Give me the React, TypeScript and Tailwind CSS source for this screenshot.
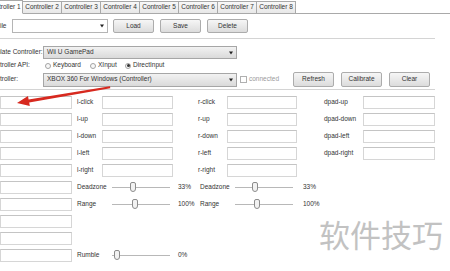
import React from 'react';

const tabs = ['Controller 2', 'Controller 3', 'Controller 4', 'Controller 5', 'Controller 6', 'Controller 7', 'Controller 8'];

function Button({ label, className = '' }: { label: string; className?: string }) {
  return (
    <div
      className={`flex items-center justify-center w-[41px] rounded-[2px] border border-[#acacac] bg-linear-to-b from-[#f6f6f6] to-[#dcdcdc] text-[#333] ${className}`}
    >
      {label}
    </div>
  );
}

// small black dropdown triangle used by the combo boxes
function ComboArrow() {
  return <div className="absolute right-[3px] top-1/2 -translate-y-1/2 w-0 h-0 border-x-[2px] border-x-transparent border-t-[3px] border-t-[#222]" />;
}

function Radio({ checked = false }: { checked?: boolean }) {
  return (
    <div className="flex items-center justify-center w-[6px] h-[6px] rounded-full border border-[#a3a3a3] bg-[#f8f8f8]">
      {checked && <div className="w-[3px] h-[3px] rounded-full bg-[#333]" />}
    </div>
  );
}

function Box() {
  return <div className="h-[13px] border border-[#d6d6d6] border-t-[#c4c4c4] bg-white" />;
}

function Slider({ width, thumb }: { width: number; thumb: number }) {
  return (
    <div className="relative h-[13px] shrink-0" style={{ width }}>
      <div className="absolute inset-x-0 top-[6px] h-px bg-[#b8b8b8]" />
      <div className="absolute top-[1px] w-[6px] h-[10px] rounded-[2px] rounded-b-[3px] border border-[#8c8c8c] bg-[#f2f2f2]" style={{ left: thumb }} />
    </div>
  );
}

function SliderRow({ rows }: { rows: { label: string; thumb: number; value: string }[] }) {
  return (
    <div className="col-span-6 flex items-center">
      {rows.map((r, i) => (
        <React.Fragment key={i}>
          <div className={i === 0 ? 'w-[40px] pl-[5px] shrink-0' : 'w-[35px] shrink-0'}>{r.label}</div>
          <Slider width={i === 0 ? 58 : 58} thumb={r.thumb} />
          <div className={i === 0 ? 'w-[30px] pl-[8px] shrink-0' : 'pl-[10px]'}>{r.value}</div>
        </React.Fragment>
      ))}
    </div>
  );
}

export default function App() {
  const left = ['l-click', 'l-up', 'l-down', 'l-left', 'l-right'];
  const right = ['r-click', 'r-up', 'r-down', 'r-left', 'r-right'];
  const dpad = ['dpad-up', 'dpad-down', 'dpad-left', 'dpad-right', ''];

  return (
    <div className="relative w-[450px] h-[271px] overflow-hidden bg-white font-['Liberation_Sans',Arial,sans-serif] text-[6.5px] leading-none text-[#333]">
      {/* Tabs */}
      <div className="flex items-end h-[14px] border-b border-[#a9a9a9]">
        <div className="-ml-[17px] -mb-px w-[40px] h-[14px] shrink-0 flex items-center pl-[3px] bg-white border border-b-white border-[#a9a9a9]">
          Controller 1
        </div>
        {tabs.map(t => (
          <div key={t} className="w-[39px] h-[12px] shrink-0 flex items-center justify-center border border-l-0 border-b-0 border-[#a9a9a9] bg-linear-to-b from-[#f8f8f8] to-[#e8e8e8]">
            {t}
          </div>
        ))}
      </div>

      {/* File row */}
      <div className="flex items-center h-[25px] w-[435px] border-b border-[#d4d4d4]">
        <div className="-ml-[4px] w-[16px] shrink-0">File</div>
        <div className="relative w-[96px] h-[14px] border border-[#b5b5b5] bg-white">
          <ComboArrow />
        </div>
        <Button label="Load" className="ml-[5px] h-[14px]" />
        <Button label="Save" className="ml-[6px] h-[14px]" />
        <Button label="Delete" className="ml-[6px] h-[14px]" />
      </div>

      {/* Controller settings */}
      <div className="w-[435px] pt-[7px] pb-[2px] border-b border-[#d4d4d4]">
        <div className="flex items-center h-[13px]">
          <div className="-ml-[13px] w-[56px] shrink-0">Emulate Controller:</div>
          <div className="relative flex items-center w-[194px] h-[13px] pl-[3px] border border-[#a6a6a6] bg-linear-to-b from-[#f2f2f2] to-[#dadada]">
            Wii U GamePad
            <ComboArrow />
          </div>
        </div>
        <div className="flex items-center h-[13px]">
          <div className="-ml-[12px] w-[57px] shrink-0">Controller API:</div>
          <div className="flex items-center w-[45px] gap-[2px] shrink-0">
            <Radio />
            <span>Keyboard</span>
          </div>
          <div className="flex items-center w-[35px] gap-[2px] shrink-0">
            <Radio />
            <span>XInput</span>
          </div>
          <div className="flex items-center gap-[2px]">
            <Radio checked />
            <span>DirectInput</span>
          </div>
        </div>
        <div className="flex items-center h-[15px]">
          <div className="-ml-[12px] w-[55px] shrink-0">Controller:</div>
          <div className="relative flex items-center w-[194px] h-[14px] pl-[3px] border border-[#a6a6a6] bg-linear-to-b from-[#f2f2f2] to-[#dadada]">
            XBOX 360 For Windows (Controller)
            <ComboArrow />
          </div>
          <div className="flex items-center w-[56px] pl-[3px] gap-[2px] shrink-0 text-[#9a9a9a]">
            <div className="w-[7px] h-[7px] border border-[#b0b0b0] bg-white" />
            <span>connected</span>
          </div>
          <Button label="Refresh" className="h-[15px]" />
          <Button label="Calibrate" className="ml-[7px] h-[15px]" />
          <Button label="Clear" className="ml-[7px] h-[15px]" />
        </div>
      </div>

      {/* Mapping grid */}
      <div className="mt-[6px] grid grid-cols-[72px_30px_71px_54px_70px_66px_72px] auto-rows-[13px] gap-y-[4px] items-center">
        {left.map((l, i) => (
          <React.Fragment key={l}>
            <Box />
            <div className="pl-[5px]">{l}</div>
            <Box />
            <div className="pl-[25px]">{right[i]}</div>
            <Box />
            <div className="pl-[27px]">{dpad[i]}</div>
            {dpad[i] ? <Box /> : <div />}
          </React.Fragment>
        ))}

        <Box />
        <SliderRow
          rows={[
            { label: 'Deadzone', thumb: 18, value: '33%' },
            { label: 'Deadzone', thumb: 17, value: '33%' },
          ]}
        />
        <Box />
        <SliderRow
          rows={[
            { label: 'Range', thumb: 20, value: '100%' },
            { label: 'Range', thumb: 19, value: '100%' },
          ]}
        />
        <Box />
        <div className="col-span-6" />
        <Box />
        <div className="col-span-6" />
        <Box />
        <SliderRow rows={[{ label: 'Rumble', thumb: 2, value: '0%' }]} />
      </div>

      {/* Red annotation arrow */}
      <svg className="absolute inset-0 pointer-events-none" width="450" height="271" viewBox="0 0 450 271">
        <polygon
          points="17,103 28,96 28.6,99.4 110,86.3 110.3,88.2 29.2,102.6 29.8,106"
          fill="#d7291f"
        />
      </svg>

      {/* Watermark */}
      <div className="absolute left-[319px] top-[218px] text-[31px] leading-none text-[#c2c2c2] font-['Noto_Sans_CJK_SC',sans-serif] pointer-events-none">
        软件技巧
      </div>
    </div>
  );
}
